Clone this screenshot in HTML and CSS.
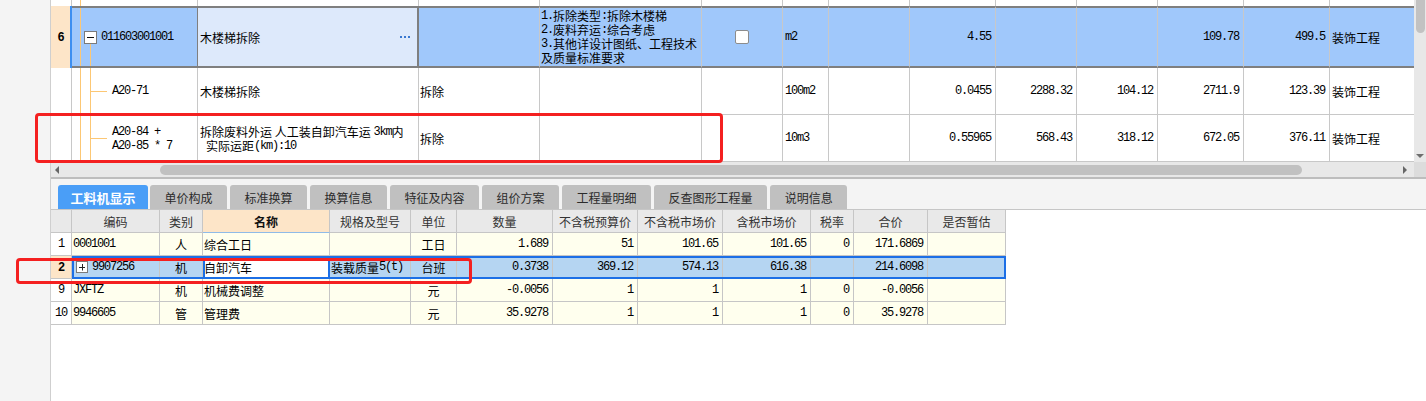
FILE: index.html
```html
<!DOCTYPE html>
<html lang="zh-CN">
<head>
<meta charset="utf-8">
<title>工料机显示</title>
<link rel="stylesheet" href="styles.css">
</head>
<body>
<div class="app">
  <aside class="side"></aside>
  <main class="main">
    <section class="top">
      <div class="tgrid">
        <div class="trow r0">
          <div class="rn"></div><div class="code tree1"></div><div></div><div></div><div></div><div></div><div></div><div></div><div></div><div></div><div></div><div></div><div></div><div></div>
        </div>
        <div class="trow r6">
          <div class="rn">6</div>
          <div class="code"><svg class="box" width="13" height="13" viewBox="0 0 13 13"><rect x="0.5" y="0.5" width="12" height="12" fill="#fff" stroke="#7a7a7a"/><path d="M3 6.5h7" stroke="#111" stroke-width="1"/></svg><span class="m">011603001001</span></div>
          <div class="name"><span>木楼梯拆除</span><svg class="dots" width="10" height="2" viewBox="0 0 10 2"><rect x="0" y="0" width="2" height="2" fill="#3a78d0"/><rect x="4" y="0" width="2" height="2" fill="#3a78d0"/><rect x="8" y="0" width="2" height="2" fill="#3a78d0"/></svg></div>
          <div></div>
          <div class="feat">
            <div class="ln"><span class="m">1.</span>拆除类型<span class="m">:</span>拆除木楼梯</div>
            <div class="ln"><span class="m">2.</span>废料弃运<span class="m">:</span>综合考虑</div>
            <div class="ln"><span class="m">3.</span>其他详设计图纸、工程技术</div>
            <div class="ln">及质量标准要求</div>
          </div>
          <div class="ctr"><span class="chk"></span></div>
          <div class="m">m2</div>
          <div></div>
          <div class="r m">4.55</div>
          <div></div>
          <div></div>
          <div class="r m">109.78</div>
          <div class="r m">499.5</div>
          <div>装饰工程</div>
        </div>
        <div class="trow rc">
          <div class="rn"></div>
          <div class="code tree"><span class="m">A20-71</span></div>
          <div>木楼梯拆除</div>
          <div>拆除</div>
          <div></div>
          <div></div>
          <div class="m">100m2</div>
          <div></div>
          <div class="r m">0.0455</div>
          <div class="r m">2288.32</div>
          <div class="r m">104.12</div>
          <div class="r m">2711.9</div>
          <div class="r m">123.39</div>
          <div>装饰工程</div>
        </div>
        <div class="trow rc">
          <div class="rn"></div>
          <div class="code tree"><div class="stack"><div class="ln m">A20-84 +</div><div class="ln m">A20-85 * 7</div></div></div>
          <div><div class="stack"><div class="ln">拆除废料外运 人工装自卸汽车运 <span class="m">3km</span>内</div><div class="ln"><span class="m">&nbsp;</span>实际运距<span class="m">(km):10</span></div></div></div>
          <div>拆除</div>
          <div></div>
          <div></div>
          <div class="m">10m3</div>
          <div></div>
          <div class="r m">0.55965</div>
          <div class="r m">568.43</div>
          <div class="r m">318.12</div>
          <div class="r m">672.05</div>
          <div class="r m">376.11</div>
          <div>装饰工程</div>
        </div>
      </div>
      <div class="vscroll"><div class="vthumb"></div><div class="varrow"></div></div>
    </section>
    <div class="hscroll">
      <div class="htrack"><span class="larrow"></span><div class="hthumb"></div><span class="rarrow"></span></div>
      <div class="corner"></div>
    </div>
    <div class="sep"></div>
    <nav class="tabs">
      <div class="tab on">工料机显示</div>
      <div class="tab">单价构成</div>
      <div class="tab">标准换算</div>
      <div class="tab">换算信息</div>
      <div class="tab">特征及内容</div>
      <div class="tab">组价方案</div>
      <div class="tab">工程量明细</div>
      <div class="tab">反查图形工程量</div>
      <div class="tab">说明信息</div>
    </nav>
    <div class="btable">
      <div class="brow bhead">
        <div></div><div>编码</div><div>类别</div><div class="hl">名称</div><div>规格及型号</div><div>单位</div><div>数量</div><div>不含税预算价</div><div>不含税市场价</div><div>含税市场价</div><div>税率</div><div>合价</div><div>是否暂估</div>
      </div>
      <div class="brow">
        <div class="rn m">1</div><div class="m">0001001</div><div class="ctr">人</div><div>综合工日</div><div></div><div class="ctr">工日</div><div class="r m">1.689</div><div class="r m">51</div><div class="r m">101.65</div><div class="r m">101.65</div><div class="r m">0</div><div class="r m">171.6869</div><div></div>
      </div>
      <div class="brow sel">
        <div class="rn m">2</div><div class="pcode"><svg class="box" width="12" height="12" viewBox="0 0 12 12"><rect x="0.5" y="0.5" width="11" height="11" fill="#fff" stroke="#7a7a7a"/><path d="M3 6.5h6M6.5 3v6.5" stroke="#222" stroke-width="1"/></svg><span class="m">9907256</span></div><div class="ctr">机</div><div class="nm">自卸汽车</div><div>装载质量<span class="m">5(t)</span></div><div class="ctr">台班</div><div class="r m">0.3738</div><div class="r m">369.12</div><div class="r m">574.13</div><div class="r m">616.38</div><div></div><div class="r m">214.6098</div><div></div>
      </div>
      <div class="brow">
        <div class="rn m">9</div><div class="m">JXFTZ</div><div class="ctr">机</div><div>机械费调整</div><div></div><div class="ctr">元</div><div class="r m">-0.0056</div><div class="r m">1</div><div class="r m">1</div><div class="r m">1</div><div class="r m">0</div><div class="r m">-0.0056</div><div></div>
      </div>
      <div class="brow">
        <div class="rn m">10</div><div class="m">9946605</div><div class="ctr">管</div><div>管理费</div><div></div><div class="ctr">元</div><div class="r m">35.9278</div><div class="r m">1</div><div class="r m">1</div><div class="r m">1</div><div class="r m">0</div><div class="r m">35.9278</div><div></div>
      </div>
    </div>
  </main>
</div>
<div class="mark mark1"></div>
<div class="mark mark2"></div>
</body>
</html>
```
FILE: styles.css
```css
* { box-sizing: border-box; }
html, body { margin: 0; padding: 0; }
body {
  width: 1426px;
  height: 401px;
  overflow: hidden;
  position: relative;
  font-family: "Noto Sans CJK SC", "Liberation Sans", sans-serif;
  font-size: 12px;
  color: #000;
  background: #fff;
}
.m {
  font-family: "Liberation Mono", monospace;
  letter-spacing: -1.2px;
}
.app { display: flex; height: 401px; }
.side { width: 50px; flex: none; background: #f4f4f4; }
.main {
  flex: 1;
  min-width: 0;
  display: flex;
  flex-direction: column;
  border-left: 1px solid #cfcfcf;
  background: #fff;
}

/* ---------- top grid ---------- */
.top { display: flex; height: 162px; flex: none; }
.tgrid { width: 1363px; flex: none; }
.trow {
  display: grid;
  grid-template-columns: 21px 126px 221px 121px 162px 81px 46px 81px 86px 81px 81px 86px 86px 84px;
}
.trow > div {
  display: flex;
  align-items: center;
  overflow: hidden;
  white-space: nowrap;
  padding: 0 2px;
  border-right: 1px solid #c8c8c8;
  border-bottom: 1px solid #c8c8c8;
}
.trow > div:nth-child(4) { padding-left: 1px; }
.trow > div:last-child { border-right: none; }
.trow > .r { justify-content: flex-end; padding-right: 4px; }
.trow > .ctr { justify-content: center; }
.r0 { height: 6px; }
.r0 > div { border-bottom: none; }
.rc { height: 47px; }
.r6 { height: 62px; }
.r6 > div {
  background: #a0c8fb;
  border-top: 2px solid #7f7f7f;
  border-bottom: 2px solid #7f7f7f;
}
.r6 > .rn {
  background: #fde5c8;
  border-top: none;
  border-bottom: none;
  border-right: 1px solid #3d8ff0;
  box-shadow: inset -1px 0 #3d8ff0;
  justify-content: center;
  font-family: "Liberation Sans", sans-serif;
  font-weight: bold;
  font-size: 12px;
}
.trow > .code { padding-left: 40px; }
.tree1 {
  background: linear-gradient(#fcc774, #fcc774) 8px 0 / 1px 100% no-repeat;
}
.tree {
  background:
    linear-gradient(#fcc774, #fcc774) 8px 0 / 1px 100% no-repeat,
    linear-gradient(#fcc774, #fcc774) 18px 0 / 1px 100% no-repeat,
    linear-gradient(#fcc774, #fcc774) 18px 50% / 17px 1px no-repeat;
}
.r6 > .code {
  padding-left: 12px;
  border-right-color: #7f7f7f;
  background:
    linear-gradient(#fcc774, #fcc774) 8px 0 / 1px 100% no-repeat,
    linear-gradient(#fcc774, #fcc774) 18px 100% / 1px 23px no-repeat,
    #a0c8fb;
}
.r6 > .code .box { margin-right: 4px; flex: none; }
.r6 > .name {
  background: #dde9fb;
  justify-content: space-between;
  padding-right: 8px;
  border-right-color: #7f7f7f;
  box-shadow: inset -1px 0 #7f7f7f;
}
.r6 > .feat {
  flex-direction: column;
  align-items: flex-start;
  justify-content: center;
  padding: 0 0 0 1px;
}
.ln {
  height: 14px;
  line-height: 14px;
  display: flex;
  align-items: center;
  white-space: pre;
}
.stack { display: flex; flex-direction: column; padding-top: 1px; }
.chk {
  width: 14px;
  height: 14px;
  background: #fff;
  border: 1px solid #8c8c8c;
  border-radius: 2px;
}

/* ---------- scrollbars ---------- */
.vscroll {
  width: 12px;
  flex: none;
  background: #e8e8e8;
  display: flex;
  flex-direction: column;
  align-items: center;
  justify-content: space-between;
  padding-bottom: 4px;
}
.vthumb {
  width: 9px;
  height: 33px;
  background: #c2c2c2;
  border-radius: 0 0 5px 5px;
}
.varrow {
  width: 0;
  height: 0;
  border-left: 4px solid transparent;
  border-right: 4px solid transparent;
  border-top: 4px solid #6e6e6e;
}
.hscroll { height: 15px; flex: none; display: flex; background: #e8e8e8; }
.htrack { width: 1363px; flex: none; display: flex; align-items: center; }
.larrow {
  width: 0;
  height: 0;
  margin-left: 4px;
  border-top: 4px solid transparent;
  border-bottom: 4px solid transparent;
  border-right: 4px solid #666;
}
.hthumb {
  margin-left: 101px;
  width: 1142px;
  height: 10px;
  border-radius: 5px;
  background: #c1c1c1;
}
.rarrow {
  width: 0;
  height: 0;
  margin-left: auto;
  margin-right: 7px;
  border-top: 4px solid transparent;
  border-bottom: 4px solid transparent;
  border-left: 4px solid #666;
}
.corner { flex: 1; background: #dcdcdc; }
.sep { height: 2px; flex: none; background: #bdbdbd; }

/* ---------- tabs ---------- */
.tabs {
  height: 31px;
  flex: none;
  display: flex;
  align-items: flex-end;
  gap: 3px;
  padding-left: 7px;
  background: #f4f4f4;
  border-bottom: 1px solid #c6c6c6;
}
.tab {
  height: 24px;
  padding: 0 14.5px;
  display: flex;
  align-items: center;
  background: #c0c0c0;
  color: #2b2b2b;
  border-radius: 3px 3px 0 0;
  white-space: nowrap;
}
.tab.on {
  background: #4a9ef7;
  color: #fff;
  font-weight: bold;
  font-size: 13px;
  padding: 0 12.5px;
  margin-right: -1px;
}

/* ---------- bottom table ---------- */
.btable { display: flex; flex-direction: column; }
.brow {
  display: grid;
  grid-template-columns: 21px 88px 43px 127px 81px 46px 96px 85px 85px 88px 43px 74px 78px;
  width: 955px;
  height: 23px;
  position: relative;
}
.brow > div {
  display: flex;
  align-items: center;
  overflow: hidden;
  white-space: nowrap;
  padding: 0 1px;
  background: #ffffee;
  border-right: 1px solid #c6c6c6;
  border-bottom: 1px solid #c6c6c6;
}
.brow > .r { justify-content: flex-end; padding-right: 4px; }
.brow > .ctr { justify-content: center; }
.brow > .rn { background: #fff; justify-content: center; }
.bhead > div {
  background: #e9e9e9;
  color: #333;
  justify-content: center;
}
.bhead > .hl {
  background: #fde5c8;
  color: #111;
  font-weight: bold;
  border-bottom: 1px solid #8fbbe8;
}
.brow.sel > div { background: #b5d5f2; }
.brow.sel > .rn {
  background: #fde5c8;
  font-family: "Liberation Sans", sans-serif;
  font-weight: bold;
}
.brow.sel > .nm {
  background: #fff;
  box-shadow: inset 2px 0 #1c6fe6, inset -1px 0 #1c6fe6;
  border-right-color: #1c6fe6;
}
.brow.sel::after {
  content: "";
  position: absolute;
  left: 21px;
  top: 0;
  right: 0;
  bottom: 0;
  border: 2px solid #1c6fe6;
  pointer-events: none;
}
.pcode { padding-left: 4px !important; }
.pcode .box { margin-right: 4px; flex: none; }

/* ---------- annotations ---------- */
.mark {
  position: absolute;
  border: 3px solid #f42020;
  border-radius: 4px;
  pointer-events: none;
}
.mark1 { left: 35px; top: 113px; width: 688px; height: 50px; }
.mark2 { left: 16px; top: 258px; width: 456px; height: 26px; }
```
